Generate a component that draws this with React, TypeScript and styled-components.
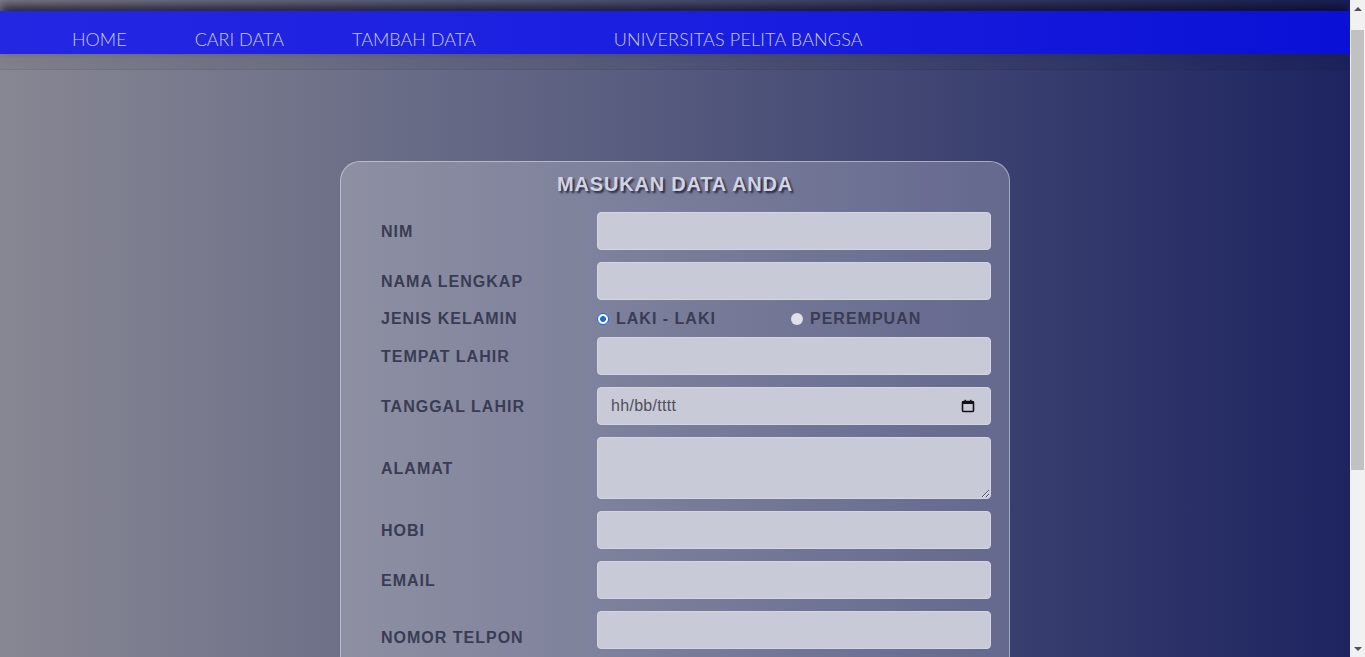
import React, { useState } from "react";
import styled, { createGlobalStyle } from "styled-components";

const GlobalStyle = createGlobalStyle`
  html, body {
    margin: 0;
    padding: 0;
  }
  body {
    min-height: 100vh;
    padding-right: 15px;
    background-color: #f1f1f1;
    font-family: "Liberation Sans", Arial, sans-serif;
  }
`;

const Page = styled.div`
  min-height: 100vh;
  background-image: linear-gradient(to right, #878793 0%, #5a5e80 45%, #1d2460 100%);
`;

const Header = styled.header`
  height: 70px;
  background: rgba(0, 0, 0, 0.05);
  border-bottom: 1px solid rgba(0, 0, 0, 0.06);
  box-sizing: border-box;
  padding-top: 11px;
`;

const NavBar = styled.nav`
  height: 43px;
  display: flex;
  align-items: center;
  padding: 12px 0 0 38px;
  box-sizing: border-box;
  background-image: linear-gradient(to right, #2427e2 0%, #1a1fe0 50%, #0b10d6 100%);
  box-shadow: 0 -6px 10px rgba(10, 10, 30, 0.75);
`;

const NavLink = styled.a<{ $title?: boolean }>`
  font-family: Lato, "Open Sans", sans-serif;
  font-weight: 300;
  font-size: 18px;
  color: #c9cbf4;
  text-decoration: none;
  padding: 0 34px;
  margin-left: ${(p) => (p.$title ? "70px" : "0")};
  letter-spacing: ${(p) => (p.$title ? "0.15px" : "0")};
  cursor: pointer;
`;

const Main = styled.main`
  display: flex;
  justify-content: center;
  padding: 91px 0 150px;
`;

const Card = styled.form`
  width: 670px;
  box-sizing: border-box;
  border: 1px solid rgba(220, 222, 240, 0.55);
  border-radius: 20px;
  background: rgba(255, 255, 255, 0.22);
  padding: 7px 19px 40px 40px;
`;

const Title = styled.h2`
  margin: 0 -19px 13px -40px;
  text-align: center;
  font-size: 20px;
  line-height: 30px;
  font-weight: bold;
  letter-spacing: 0.8px;
  color: #d2d4e2;
  text-shadow: 2px 2px 2px rgba(20, 20, 40, 0.8);
`;

const Grid = styled.div`
  display: grid;
  grid-template-columns: 216px 394px;
  row-gap: 12px;
  align-items: center;
`;

const Label = styled.label`
  font-size: 16px;
  line-height: 13px;
  font-weight: bold;
  letter-spacing: 1px;
  color: #393c54;
  text-transform: uppercase;
`;

const Cell = styled.div<{ $extra?: number }>`
  position: relative;
  padding-bottom: ${(p) => p.$extra ?? 0}px;
`;

const TextInput = styled.input`
  display: block;
  width: 100%;
  height: 38px;
  box-sizing: border-box;
  border: 1px solid #d3d5e2;
  border-radius: 4px;
  background: #c8cad8;
  padding: 0 13px;
  font-family: "Liberation Sans", Arial, sans-serif;
  font-size: 16px;
  color: #333;
  outline: none;
  &::placeholder {
    color: #505058;
    letter-spacing: 0.3px;
  }
`;

const TextArea = styled.textarea`
  display: block;
  width: 100%;
  height: 62px;
  box-sizing: border-box;
  border: 1px solid #d3d5e2;
  border-radius: 4px;
  background: #c8cad8;
  padding: 6px 13px;
  font-family: "Liberation Sans", Arial, sans-serif;
  font-size: 15px;
  outline: none;
`;

const CalendarIcon = styled.svg`
  position: absolute;
  right: 16px;
  top: 12px;
  pointer-events: none;
`;

const RadioRow = styled.div`
  display: grid;
  grid-template-columns: 194px auto;
  height: 13px;
  align-items: center;
`;

const Option = styled.label`
  display: flex;
  align-items: center;
  gap: 7px;
  font-size: 16px;
  line-height: 13px;
  font-weight: bold;
  letter-spacing: 1px;
  color: #393c54;
  cursor: pointer;
`;

const Radio = styled.input`
  appearance: none;
  margin: 0;
  width: 12px;
  height: 12px;
  border-radius: 50%;
  background: #e0e0e8;
  box-sizing: border-box;
  &:checked {
    border: 1.5px solid #1a6be0;
    background: radial-gradient(circle, #1a6be0 0 2.6px, #ffffff 3.2px);
  }
`;

const ScrollTrack = styled.div`
  position: fixed;
  top: 0;
  right: 0;
  width: 15px;
  height: 100vh;
  background: #f1f1f1;
  display: flex;
  flex-direction: column;
  align-items: center;
`;

const ScrollArrow = styled.div<{ $down?: boolean }>`
  height: 17px;
  width: 15px;
  display: flex;
  align-items: center;
  justify-content: center;
  &::after {
    content: "";
    border-left: 4px solid transparent;
    border-right: 4px solid transparent;
    ${(p) =>
      p.$down ? "border-top: 4px solid #505050;" : "border-bottom: 4px solid #505050;"}
  }
`;

const ScrollThumb = styled.div`
  margin-top: 13px;
  width: 13px;
  height: 440px;
  background: #c1c1c1;
`;

const Spacer = styled.div`
  flex: 1;
`;

const fields = [
  { id: "nim", label: "NIM" },
  { id: "nama", label: "NAMA LENGKAP" },
];

export default function App() {
  const [gender, setGender] = useState("L");

  return (
    <>
      <GlobalStyle />
      <Page>
        <Header>
          <NavBar>
            <NavLink>HOME</NavLink>
            <NavLink>CARI DATA</NavLink>
            <NavLink>TAMBAH DATA</NavLink>
            <NavLink $title>UNIVERSITAS PELITA BANGSA</NavLink>
          </NavBar>
        </Header>
        <Main>
          <Card onSubmit={(e) => e.preventDefault()}>
            <Title>MASUKAN DATA ANDA</Title>
            <Grid>
              {fields.map((f) => (
                <React.Fragment key={f.id}>
                  <Label htmlFor={f.id}>{f.label}</Label>
                  <Cell>
                    <TextInput id={f.id} type="text" />
                  </Cell>
                </React.Fragment>
              ))}

              <Label>JENIS KELAMIN</Label>
              <RadioRow>
                <Option>
                  <Radio
                    type="radio"
                    name="jk"
                    checked={gender === "L"}
                    onChange={() => setGender("L")}
                  />
                  LAKI - LAKI
                </Option>
                <Option>
                  <Radio
                    type="radio"
                    name="jk"
                    checked={gender === "P"}
                    onChange={() => setGender("P")}
                  />
                  PEREMPUAN
                </Option>
              </RadioRow>

              <Label htmlFor="tempat">TEMPAT LAHIR</Label>
              <Cell>
                <TextInput id="tempat" type="text" />
              </Cell>

              <Label htmlFor="tgl">TANGGAL LAHIR</Label>
              <Cell>
                <TextInput id="tgl" type="text" placeholder="hh/bb/tttt" />
                <CalendarIcon width="14" height="14" viewBox="0 0 14 14">
                  <rect x="1.5" y="2.5" width="11" height="10" rx="1" fill="none" stroke="#111" strokeWidth="1.6" />
                  <rect x="1.5" y="2.5" width="11" height="2.5" fill="#111" />
                  <rect x="3.6" y="0.8" width="1.4" height="2.6" fill="#111" />
                  <rect x="9" y="0.8" width="1.4" height="2.6" fill="#111" />
                </CalendarIcon>
              </Cell>

              <Label htmlFor="alamat">ALAMAT</Label>
              <Cell>
                <TextArea id="alamat" />
              </Cell>

              <Label htmlFor="hobi">HOBI</Label>
              <Cell>
                <TextInput id="hobi" type="text" />
              </Cell>

              <Label htmlFor="email">EMAIL</Label>
              <Cell>
                <TextInput id="email" type="email" />
              </Cell>

              <Label htmlFor="telp">NOMOR TELPON</Label>
              <Cell $extra={14}>
                <TextInput id="telp" type="text" />
              </Cell>
            </Grid>
          </Card>
        </Main>
      </Page>
      <ScrollTrack>
        <ScrollArrow />
        <ScrollThumb />
        <Spacer />
        <ScrollArrow $down />
      </ScrollTrack>
    </>
  );
}
